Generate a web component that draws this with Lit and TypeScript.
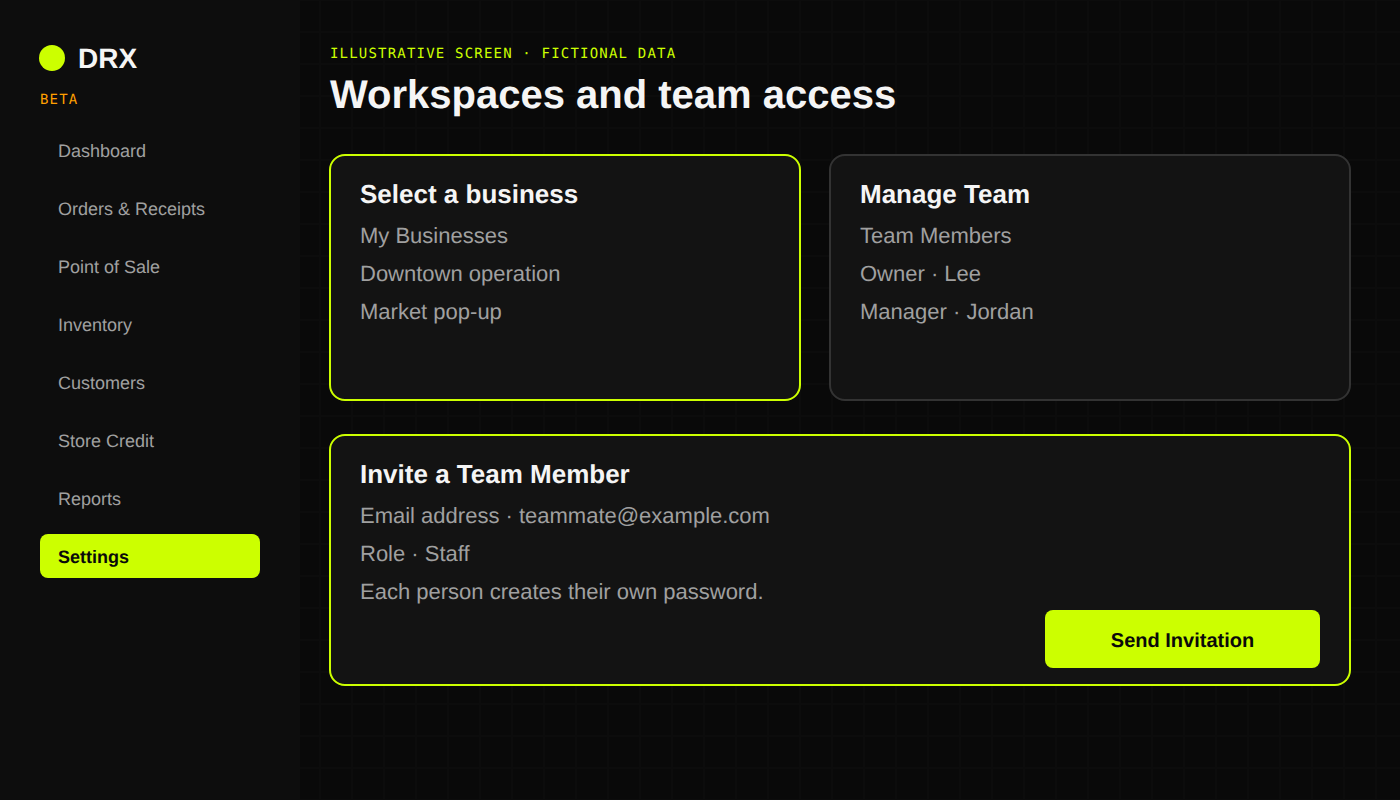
import { LitElement, html, css } from "lit";
import { customElement, property, state } from "lit/decorators.js";
import { classMap } from "lit/directives/class-map.js";

const NAV_ITEMS = [
  "Dashboard",
  "Orders & Receipts",
  "Point of Sale",
  "Inventory",
  "Customers",
  "Store Credit",
  "Reports",
  "Settings",
];

@customElement("drx-card")
class DrxCard extends LitElement {
  @property() heading = "";
  @property({ attribute: false }) lines: string[] = [];
  @property({ type: Boolean, reflect: true }) highlighted = false;

  static styles = css`
    :host {
      display: flex;
      flex-direction: column;
      box-sizing: border-box;
      min-height: 247px;
      padding: 19px 29px 16px;
      border: 2px solid #333;
      border-radius: 16px;
      background: #131313;
    }
    :host([highlighted]) {
      border-color: #cf0;
    }
    .heading {
      margin: 0 0 4px;
      font-size: 26px;
      line-height: 38px;
      font-weight: 700;
      color: #f5f5f5;
    }
    .line {
      margin: 0;
      font-size: 22px;
      line-height: 38px;
      color: #a0a0a0;
    }
    ::slotted(button) {
      margin-top: -1px;
    }
  `;

  render() {
    return html`
      <h2 class="heading">${this.heading}</h2>
      ${this.lines.map((line) => html`<p class="line">${line}</p>`)}
      <slot></slot>
    `;
  }
}

@customElement("app-root")
class AppRoot extends LitElement {
  @state() private current = "Settings";

  static styles = css`
    :host {
      display: grid;
      grid-template-columns: 300px minmax(0, 1fr);
      min-height: 100vh;
      background: #090909;
      font-family: "Liberation Sans", Arial, sans-serif;
      text-rendering: geometricPrecision;
      color: #f5f5f5;
    }
    .sidebar {
      padding: 40px;
      background: #0d0d0d;
    }
    .brand {
      display: flex;
      align-items: center;
      gap: 13px;
      margin-left: -1px;
      font-size: 28px;
      line-height: 34px;
      font-weight: 700;
    }
    .name {
      padding-top: 2px;
    }
    .dot {
      width: 26px;
      height: 26px;
      border-radius: 50%;
      background: #cf0;
    }
    .mono {
      margin: 0;
      font-family: "DejaVu Sans Mono", monospace;
      font-size: 14px;
      line-height: 20px;
      letter-spacing: 0.085em;
    }
    .stage {
      margin-top: 14px;
      color: #ff9f00;
    }
    .nav {
      display: flex;
      flex-direction: column;
      gap: 14px;
      margin-top: 18px;
    }
    .link {
      padding: 2px 18px 0;
      border-radius: 8px;
      font-size: 18px;
      line-height: 42px;
      color: #a0a0a0;
      text-decoration: none;
    }
    .link.active {
      background: #cf0;
      color: #0a0a0a;
      font-weight: 700;
    }
    .main {
      padding: 44px 50px 40px 30px;
      background-image: linear-gradient(90deg, #0c0c0c 1px, transparent 1px, transparent 31px, #0c0c0c 31px),
        linear-gradient(#0c0c0c 1px, transparent 1px, transparent 31px, #0c0c0c 31px);
      background-size: 32px 32px;
      background-position: 20px 0;
    }
    .eyebrow {
      color: #cf0;
    }
    .title {
      margin: 7px 0 0;
      font-size: 40px;
      line-height: 48px;
      font-weight: 700;
    }
    .cards {
      display: grid;
      grid-template-columns: minmax(0, 472fr) minmax(0, 522fr);
      gap: 33px 28px;
      margin: 35px -1px 0;
    }
    .wide {
      grid-column: 1 / -1;
    }
    .send {
      align-self: flex-end;
      width: 275px;
      height: 58px;
      padding: 4px 0 0;
      border: 0;
      border-radius: 8px;
      background: #cf0;
      color: #0a0a0a;
      font: 700 20px/24px "Liberation Sans", Arial, sans-serif;
      text-rendering: inherit;
      cursor: pointer;
    }
  `;

  render() {
    return html`
      <aside class="sidebar">
        <div class="brand"><span class="dot"></span><span class="name">DRX</span></div>
        <p class="mono stage">BETA</p>
        <nav class="nav">
          ${NAV_ITEMS.map(
            (item) => html`<a
              href="#"
              class=${classMap({ link: true, active: item === this.current })}
              @click=${(event: Event) => {
                event.preventDefault();
                this.current = item;
              }}
              >${item}</a
            >`
          )}
        </nav>
      </aside>
      <main class="main">
        <p class="mono eyebrow">ILLUSTRATIVE SCREEN · FICTIONAL DATA</p>
        <h1 class="title">Workspaces and team access</h1>
        <div class="cards">
          <drx-card
            highlighted
            heading="Select a business"
            .lines=${["My Businesses", "Downtown operation", "Market pop-up"]}
          ></drx-card>
          <drx-card
            heading="Manage Team"
            .lines=${["Team Members", "Owner · Lee", "Manager · Jordan"]}
          ></drx-card>
          <drx-card
            class="wide"
            highlighted
            heading="Invite a Team Member"
            .lines=${[
              "Email address · teammate@example.com",
              "Role · Staff",
              "Each person creates their own password.",
            ]}
          >
            <button class="send" type="button">Send Invitation</button>
          </drx-card>
        </div>
      </main>
    `;
  }
}
